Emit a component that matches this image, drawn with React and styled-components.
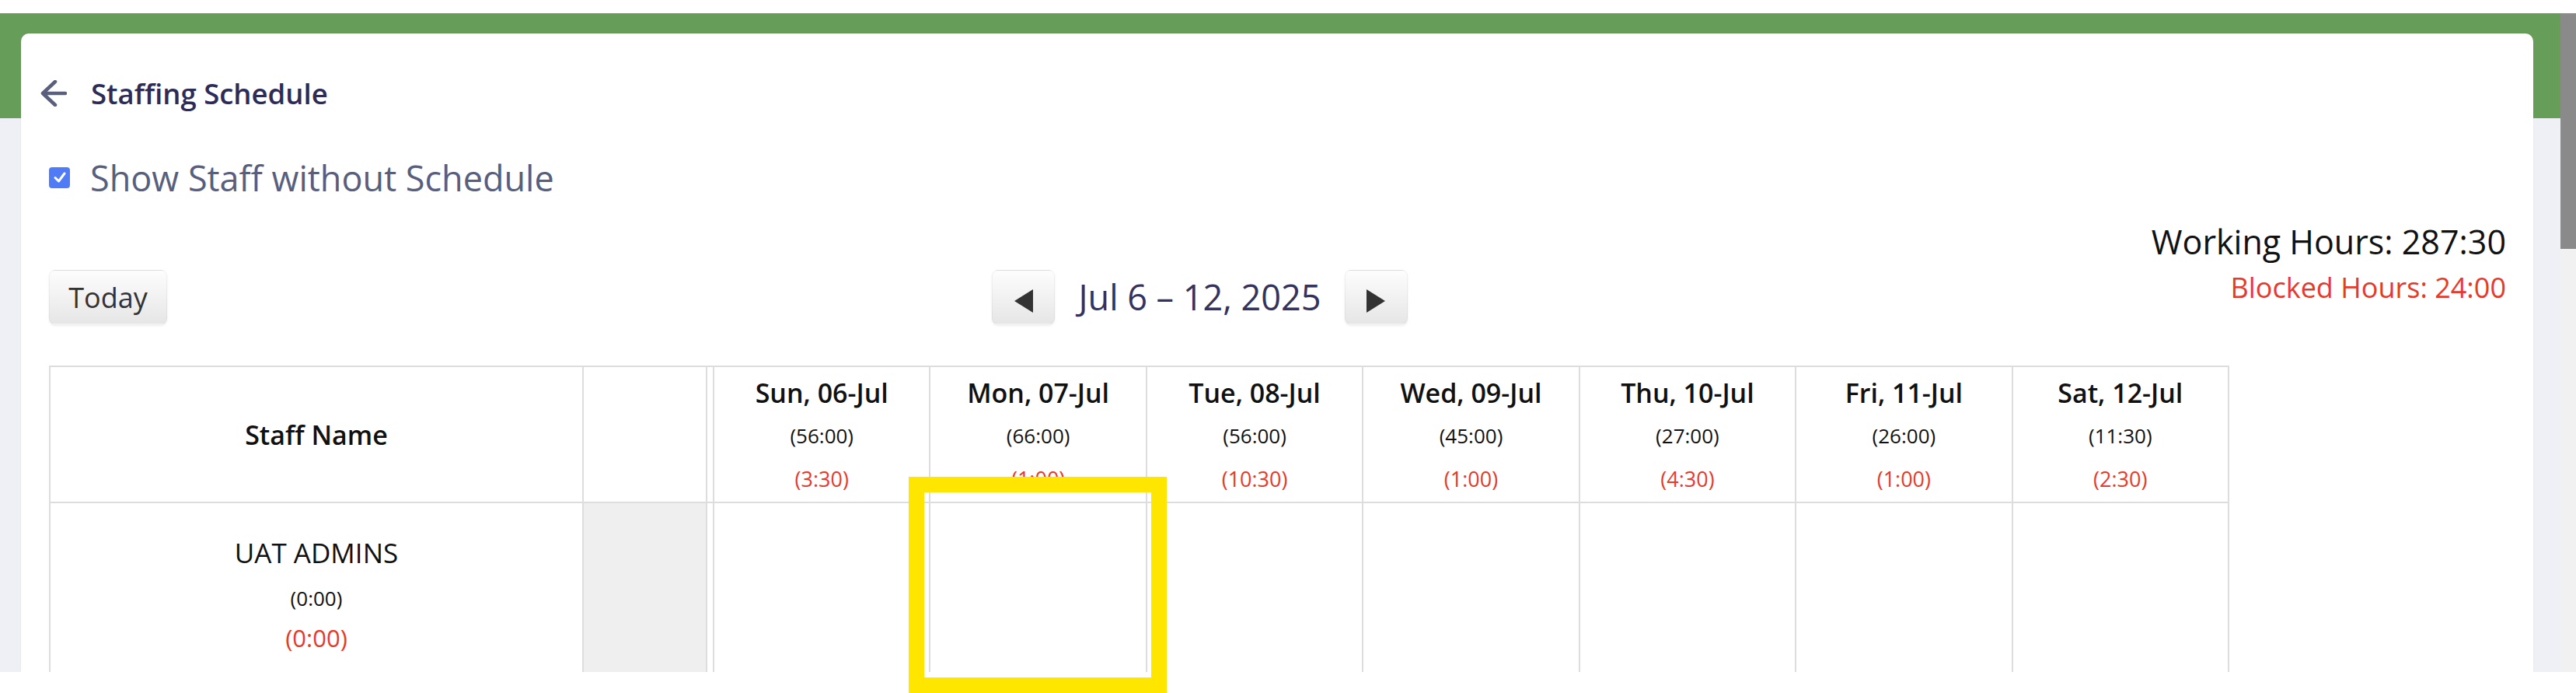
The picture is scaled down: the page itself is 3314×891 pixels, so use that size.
import React from "react"
import styled, { createGlobalStyle } from "styled-components"

const GlobalStyle = createGlobalStyle`
  body {
    margin: 0;
    background: #fff;
    font-family: "Open Sans", "Noto Sans", sans-serif;
  }
`

const Screen = styled.div`
  position: relative;
  height: 891px;
  padding-top: 17px;
  box-sizing: border-box;
  overflow: hidden;
`

const Viewport = styled.div`
  display: flex;
  height: 847px;
`

const Page = styled.div`
  flex: 1;
  overflow: hidden;
  padding: 26px 35px 0 27px;
  background: linear-gradient(#669d58 0, #669d58 135px, #eef0f5 135px);
`

const Card = styled.div`
  height: 100%;
  box-sizing: border-box;
  padding: 52px 35px 0 25px;
  background: #fff;
  border-radius: 10px 10px 0 0;
  box-shadow: 0 0 2px rgba(0, 0, 0, 0.08);
`

const ScrollTrack = styled.div`
  width: 20px;
  background: #f1f1f1;
`

const ScrollThumb = styled.div`
  height: 303px;
  background: #8a8a8a;
`

const TitleBar = styled.div`
  display: flex;
  align-items: center;
  height: 50px;
  gap: 31px;
`

const BackIcon = styled.svg`
  width: 34px;
  height: 34px;
  flex: none;
`

const Title = styled.h1`
  margin: 0;
  font-size: 36.5px;
  line-height: 50px;
  font-weight: 600;
  color: #2d2c57;
`

const Body = styled.div`
  padding-left: 11px;
`

const CheckRow = styled.label`
  display: flex;
  align-items: center;
  gap: 26px;
  height: 60px;
  margin-top: 53px;
  font-size: 45px;
  color: #575e7e;
`

const CheckBox = styled.span`
  display: flex;
  align-items: center;
  justify-content: center;
  width: 27px;
  height: 27px;
  border-radius: 4px;
  background: #4f7cf6;
`

const CalendarArea = styled.div`
  display: grid;
  grid-template-columns: 2809px 1fr;
  margin-top: 22px;
`

const Totals = styled.div`
  grid-column: 1 / -1;
  grid-row: 1;
  justify-self: end;
  text-align: right;
  white-space: nowrap;
`

const TotalLine = styled.div`
  font-size: ${(p) => (p.$blocked ? "36px" : "43px")};
  line-height: ${(p) => (p.$blocked ? "52px" : "62px")};
  margin-top: ${(p) => (p.$blocked ? "2px" : "0")};
  color: ${(p) => (p.$blocked ? "#e53b2c" : "#111")};
`

const Calendar = styled.div`
  grid-column: 1;
  grid-row: 1;
  padding-top: 67px;
`

const Toolbar = styled.div`
  display: flex;
  align-items: center;
`

const Button = styled.button`
  display: flex;
  align-items: center;
  justify-content: center;
  height: 70px;
  width: ${(p) => p.$width || "81px"};
  padding: 0;
  border: 1px solid rgba(0, 0, 0, 0.04);
  border-radius: 8px;
  background: linear-gradient(#fdfdfd, #e6e6e6);
  box-shadow: 0 2px 3px rgba(0, 0, 0, 0.07);
  font-family: inherit;
  font-size: 36px;
  color: #333;
`

const NavWrap = styled.div`
  flex: 1;
  display: flex;
  justify-content: center;
`

const Nav = styled.div`
  display: flex;
  align-items: center;
  gap: 30px;
`

const RangeLabel = styled.h2`
  margin: 0;
  font-size: 45px;
  font-weight: 500;
  color: #33335c;
  line-height: 70px;
`

const Triangle = styled.span`
  margin-top: 10px;
  width: 0;
  height: 0;
  border-top: 15px solid transparent;
  border-bottom: 15px solid transparent;
  ${(p) =>
    p.$dir === "left"
      ? "border-right: 24px solid #333;"
      : "border-left: 24px solid #333;"}
`

const Table = styled.div`
  display: grid;
  width: 2805px;
  grid-template-columns: 686px 159px 9px repeat(7, 1fr);
  margin-top: 53px;
  border-top: 2px solid #ddd;
  border-left: 2px solid #ddd;
  box-sizing: border-box;
`

const Cell = styled.div`
  box-sizing: border-box;
  height: ${(p) => (p.$head ? "175px" : "300px")};
  border-right: 2px solid #ddd;
  border-bottom: 2px solid #ddd;
  background: ${(p) => (p.$shaded ? "#efefef" : "#fff")};
`

const HeadCenter = styled(Cell)`
  display: flex;
  align-items: center;
  justify-content: center;
  font-size: 34px;
  font-weight: 600;
  color: #111;
`

const DayHead = styled(Cell)`
  display: flex;
  flex-direction: column;
  align-items: center;
  padding-top: 6px;
`

const DayName = styled.div`
  font-size: 34px;
  font-weight: 600;
  line-height: 54px;
  color: #111;
`

const Hours = styled.div`
  font-size: ${(p) => p.$size || "26px"};
  line-height: ${(p) => p.$lh || "56px"};
  margin-top: ${(p) => p.$mt || "0"};
  color: ${(p) => (p.$blocked ? "#e53b2c" : "#111")};
`

const StaffCell = styled(Cell)`
  display: flex;
  flex-direction: column;
  align-items: center;
  padding-top: 44px;
`

const StaffName = styled.div`
  font-size: 35px;
  line-height: 40px;
  color: #111;
`

const Highlight = styled.div`
  position: absolute;
  left: 1169px;
  top: 613px;
  width: 332px;
  height: 278px;
  box-sizing: border-box;
  border: 20px solid #ffe600;
  pointer-events: none;
`

const days = [
  { name: "Sun, 06-Jul", hours: "56:00", blocked: "3:30" },
  { name: "Mon, 07-Jul", hours: "66:00", blocked: "1:00" },
  { name: "Tue, 08-Jul", hours: "56:00", blocked: "10:30" },
  { name: "Wed, 09-Jul", hours: "45:00", blocked: "1:00" },
  { name: "Thu, 10-Jul", hours: "27:00", blocked: "4:30" },
  { name: "Fri, 11-Jul", hours: "26:00", blocked: "1:00" },
  { name: "Sat, 12-Jul", hours: "11:30", blocked: "2:30" },
]

const App = () => {
  return (
    <>
      <GlobalStyle />
      <Screen>
        <Viewport>
          <Page>
            <Card>
              <TitleBar>
                <BackIcon viewBox="0 0 34 34">
                  <path
                    d="M19 2 L3 17 L19 32 M3 17 H32"
                    fill="none"
                    stroke="#5a5f7d"
                    strokeWidth="4.5"
                    strokeLinecap="round"
                    strokeLinejoin="round"
                  />
                </BackIcon>
                <Title>Staffing Schedule</Title>
              </TitleBar>

              <Body>
                <CheckRow>
                  <CheckBox>
                    <svg width="18" height="18" viewBox="0 0 18 18">
                      <path
                        d="M3 9.5 L7.5 14 L15 4"
                        fill="none"
                        stroke="#fff"
                        strokeWidth="3"
                        strokeLinecap="round"
                        strokeLinejoin="round"
                      />
                    </svg>
                  </CheckBox>
                  Show Staff without Schedule
                </CheckRow>

                <CalendarArea>
                  <Totals>
                    <TotalLine>Working Hours: 287:30</TotalLine>
                    <TotalLine $blocked>Blocked Hours: 24:00</TotalLine>
                  </Totals>

                  <Calendar>
                    <Toolbar>
                      <Button $width="152px">Today</Button>
                      <NavWrap>
                        <Nav>
                          <Button>
                            <Triangle $dir="left" />
                          </Button>
                          <RangeLabel>Jul 6 – 12, 2025</RangeLabel>
                          <Button>
                            <Triangle $dir="right" />
                          </Button>
                        </Nav>
                      </NavWrap>
                    </Toolbar>

                    <Table>
                      <HeadCenter $head>Staff Name</HeadCenter>
                      <Cell $head />
                      <Cell $head />
                      {days.map((d) => (
                        <DayHead $head key={d.name}>
                          <DayName>{d.name}</DayName>
                          <Hours>({d.hours})</Hours>
                          <Hours $blocked $size="27px">
                            ({d.blocked})
                          </Hours>
                        </DayHead>
                      ))}

                      <StaffCell>
                        <StaffName>UAT ADMINS</StaffName>
                        <Hours $lh="40px" $mt="18px">
                          (0:00)
                        </Hours>
                        <Hours $blocked $size="31px" $lh="46px" $mt="8px">
                          (0:00)
                        </Hours>
                      </StaffCell>
                      <Cell $shaded />
                      <Cell />
                      {days.map((d) => (
                        <Cell key={d.name} />
                      ))}
                    </Table>
                  </Calendar>
                </CalendarArea>
              </Body>
            </Card>
          </Page>
          <ScrollTrack>
            <ScrollThumb />
          </ScrollTrack>
        </Viewport>
        <Highlight />
      </Screen>
    </>
  )
}

export default App
